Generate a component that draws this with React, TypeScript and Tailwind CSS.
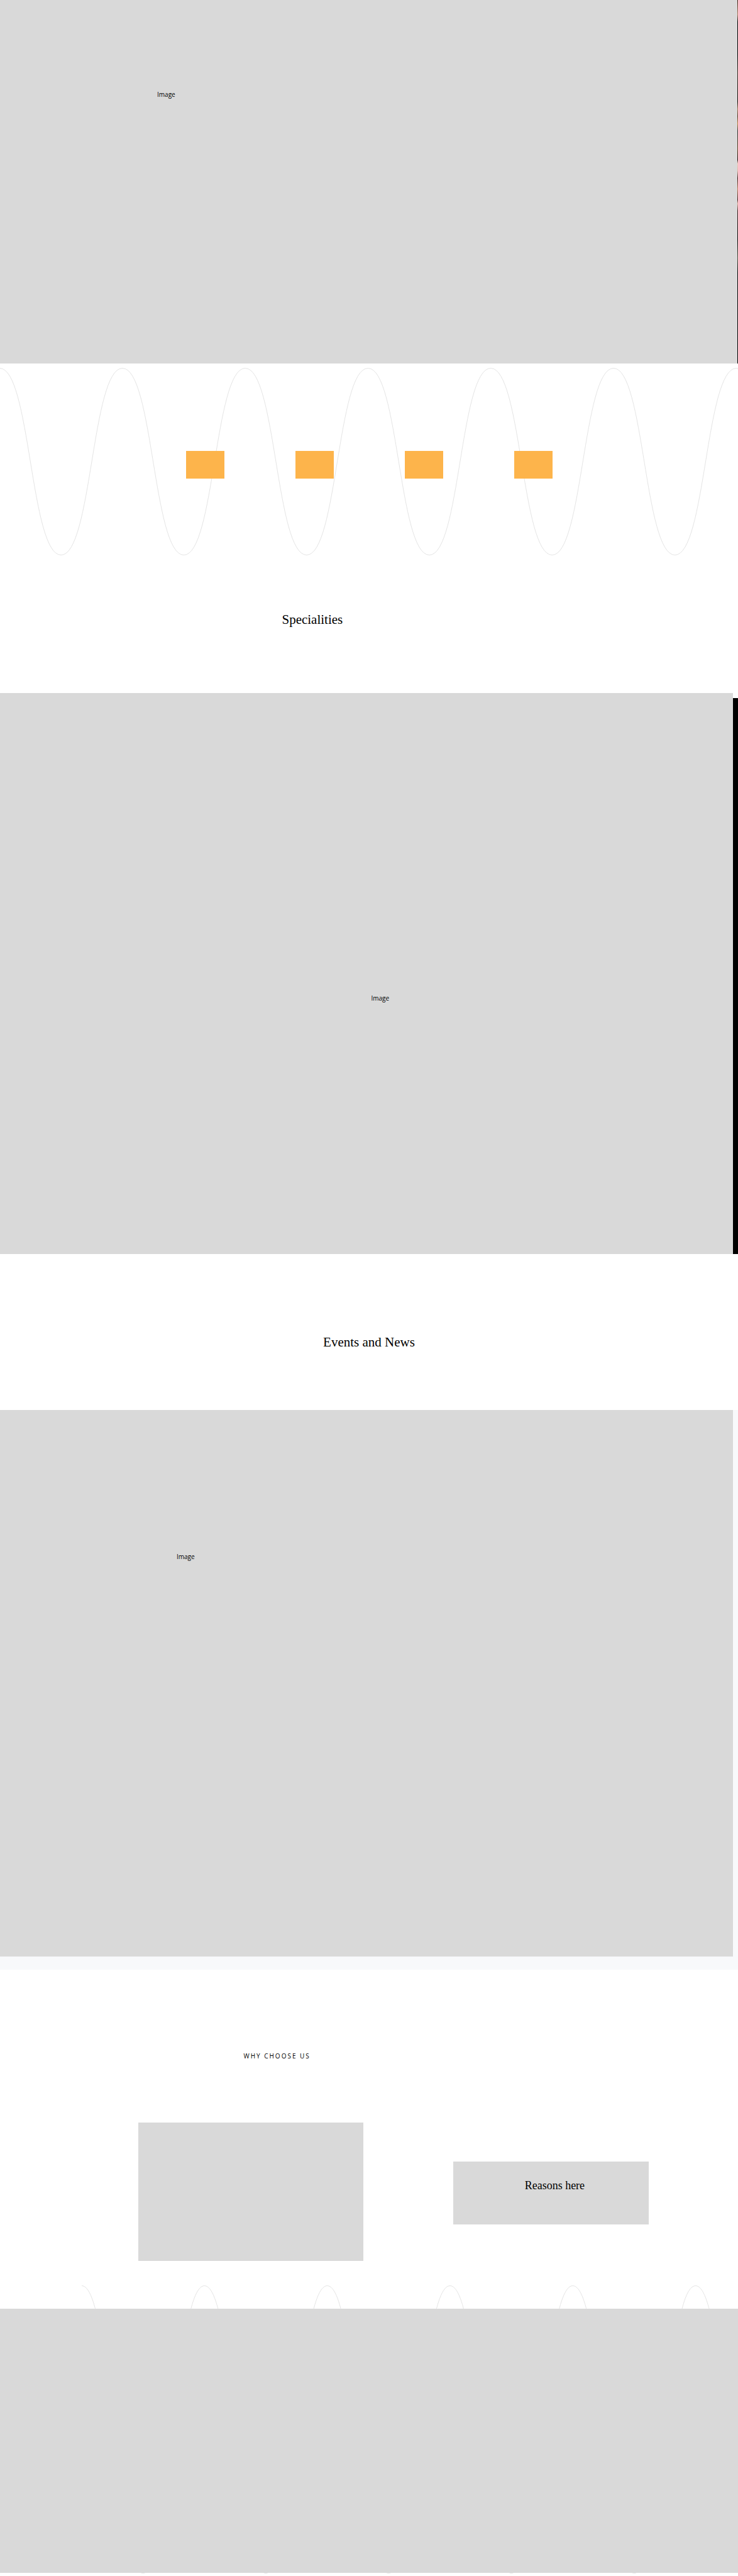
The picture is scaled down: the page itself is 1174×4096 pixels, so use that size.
const period = 195.3;

function wavePath(startX: number, top: number, bottom: number, cycles: number) {
  let d = `M${startX} ${top}`;
  const half = period / 2;
  const k = half / 2;
  for (let i = 0; i < cycles; i++) {
    const x = startX + i * period;
    d += ` C${x + k} ${top} ${x + half - k} ${bottom} ${x + half} ${bottom}`;
    d += ` C${x + half + k} ${bottom} ${x + period - k} ${top} ${x + period} ${top}`;
  }
  return d;
}

function Wave({ startX, height, cycles, className }: { startX: number; height: number; cycles: number; className: string }) {
  return (
    <svg aria-hidden="true" viewBox={`0 0 1174 ${height}`} preserveAspectRatio="none" className={className}>
      <path d={wavePath(startX, 0.5, height - 0.5, cycles)} fill="none" stroke="#d9d9d9" strokeWidth="0.7" />
    </svg>
  );
}

export default function App() {
  return (
    <main className="w-full overflow-hidden bg-white font-['Open_Sans',sans-serif] text-black">
      <section className="flex h-[578px] bg-black">
        <div className="grow bg-[#d9d9d9] pt-[143px] pl-[21.3%]">
          <p className="text-[10px] leading-[14px]">Image</p>
        </div>
        <div className="w-px bg-[linear-gradient(#3a1a10_0%,#b07a60_4%,#000_6%,#000_15%,#3a2a22_20%,#100804_28%,#a07050_30%,#503020_32%,#c08040_34%,#333_36%,#604020_41%,#200808_44%,#f0c8b8_45%,#e0b0a0_47%,#3a1515_49%,#c07858_52%,#401818_55%,#e0a898_56%,#402020_58%,#080404_66%,#505040_71%,#050505_75%,#000_100%)]" />
      </section>

      <section className="relative h-[524px]">
        <Wave startX={-0.5} height={298} cycles={7} className="absolute top-[7px] left-0 h-[298px] w-full" />
        <div className="relative flex justify-center gap-[113px] pt-[139px]">
          <div className="h-11 w-[61px] bg-[#fdb44b]" />
          <div className="h-11 w-[61px] bg-[#fdb44b]" />
          <div className="h-11 w-[61px] bg-[#fdb44b]" />
          <div className="h-11 w-[61px] bg-[#fdb44b]" />
        </div>
        <h2 className="pt-[210px] pl-[38.2%] font-['Liberation_Serif',serif] text-[21px] leading-7">Specialities</h2>
      </section>

      <section className="flex h-[892px]">
        <div className="flex grow flex-col justify-center bg-[#d9d9d9] pt-[78px] pl-[50.3%]">
          <p className="text-[10px] leading-[14px]">Image</p>
        </div>
        <div className="mt-2 w-2 bg-black" />
      </section>

      <section className="h-[248px] pt-[126px]">
        <h2 className="text-center font-['Liberation_Serif',serif] text-[21px] leading-7">Events and News</h2>
      </section>

      <section className="h-[890px] bg-[#f8f9fb] pr-2 pb-[21px]">
        <div className="h-full bg-[#d9d9d9] pt-[226px] pl-[24.1%]">
          <p className="text-[10px] leading-[14px]">Image</p>
        </div>
      </section>

      <section className="relative h-[539px]">
        <h2 className="pt-[130px] pl-[33%] text-[10px] leading-[14px] tracking-[2px]">WHY CHOOSE US</h2>
        <div className="flex items-start pt-[99px] pl-[18.75%]">
          <div className="h-[220px] w-[37.5%] bg-[#d9d9d9]" />
          <div className="mt-[62px] ml-[15%] h-[100px] w-[32.6%] bg-[#d9d9d9] pt-[26px] text-center">
            <h3 className="pl-3 font-['Liberation_Serif',serif] text-lg leading-6">Reasons here</h3>
          </div>
        </div>
        <Wave startX={130} height={458} cycles={6} className="absolute top-[502px] left-0 h-[458px] w-full" />
      </section>

      <footer className="relative mb-[5px] h-[420px] bg-[#d9d9d9]" />
    </main>
  );
}
